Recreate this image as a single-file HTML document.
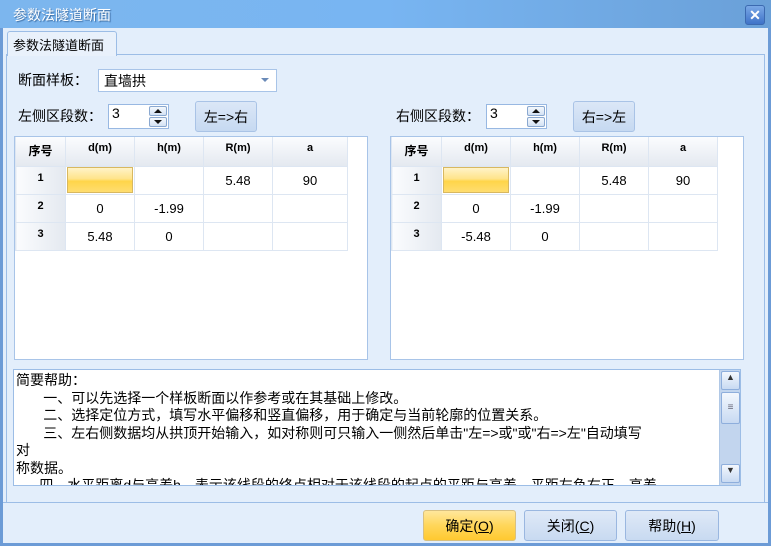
<!DOCTYPE html>
<html><head><meta charset="utf-8"><style>
*{box-sizing:border-box;margin:0;padding:0}
body{width:771px;height:546px;position:relative;overflow:hidden;background:#e3eefb;font-family:"Liberation Sans","Noto Sans CJK SC",sans-serif;font-size:13px;color:#000}
.a{position:absolute}
#frame{left:0;top:0;width:771px;height:546px;border:3px solid #6c9bd6;border-top:none}
#title{left:0;top:0;width:771px;height:28px;background:linear-gradient(90deg,#7cb6ee,#78b5f2 50%,#6aa0d8);color:#fff;font-size:14px;padding:5px 0 0 13px;text-shadow:1px 1px 1px #3a6aa0}
#close{left:745px;top:5px;width:20px;height:20px;border:1px solid #3c6ab0;border-radius:3px;background:linear-gradient(#7aa8e6,#3f73c8);color:#fff;font-weight:bold;font-size:14px;text-align:center;line-height:18px}
#tab{left:7px;top:31px;width:110px;height:25px;border:1px solid #9cbde6;border-bottom:none;border-radius:3px 3px 0 0;background:#e9f1fb;padding:3px 0 0 5px;z-index:2}
#panel{left:6px;top:54px;width:759px;height:449px;border:1px solid #9cbde6}
#bottomline{left:3px;top:502px;width:765px;height:1px;background:#9cbde6}
.combo{background:#fff;border:1px solid #a8c4e8;padding:1px 0 0 5px;font-size:14px}
.spin{background:#fff;border:1px solid #98b8e2;font-size:14px;padding:0 0 0 3px}
.sbtn{position:absolute;right:1px;width:18px;height:10px;border:1px solid #8aa8d0;border-radius:2px;background:linear-gradient(#f4f8fd,#d4e2f4)}
.sbtn i{position:absolute;left:4px;width:0;height:0;border-left:4px solid transparent;border-right:4px solid transparent}
.up i{top:2px;border-bottom:4px solid #111}
.dn i{top:2px;border-top:4px solid #111}
.btn{border:1px solid #a9c3e6;border-radius:3px;background:linear-gradient(#dbe7f7,#c6d9f1);text-align:center;font-size:14px}
.grid{background:#fff;border:1px solid #a8c4e8}
table{border-collapse:collapse;position:absolute;left:0;top:0}
td{border:1px solid #dde6f2;height:28px;text-align:center;font-size:13px;padding:0}
th{height:29px;font-size:11px;font-weight:bold;background:linear-gradient(#fbfcfe,#e4e9f0);border:1px solid #dde6f2;border-top:none;vertical-align:top;padding-top:5px}
td.h{background:linear-gradient(90deg,#fbfcfe,#e4e9f0);font-size:11px;font-weight:bold;vertical-align:top;padding-top:5px}
td.y{padding:0}
td.y div{margin:0 1px;height:26px;border:1px solid #d8b860;background:linear-gradient(#fff3c8,#ffe48a 45%,#ffd54a 55%,#ffdd70)}
#help{left:13px;top:369px;width:728px;height:117px;background:#fff;border:1px solid #9cbde6;overflow:hidden;font-size:14px;line-height:17.5px;padding:2px 0 0 2px}
#sb{left:719px;top:370px;width:21px;height:115px;background:#c2d5ee;border-left:1px solid #b0c8e6}
.sba{position:absolute;left:1px;width:19px;height:19px;border:1px solid #8eaedc;border-radius:2px;background:linear-gradient(#f3f7fd,#c8daf2)}
.db{border:1px solid #9ab7e0;border-radius:3px;background:linear-gradient(#dfe9f7,#c8daf1);text-align:center;font-size:14px;padding-top:5px}
</style></head><body>
<div class="a" id="frame"></div>
<div class="a" id="title">参数法隧道断面</div>
<div class="a" id="close">✕</div>
<div class="a" id="panel"></div>
<div class="a" id="tab">参数法隧道断面</div>
<div class="a" id="bottomline"></div>

<div class="a" style="left:18px;top:70px;font-size:14px">断面样板：</div>
<div class="a combo" style="left:98px;top:69px;width:179px;height:23px">直墙拱<span style="position:absolute;right:7px;top:8px;border:4px solid transparent;border-top:4px solid #6a8ab8;border-bottom:none;width:0;height:0"></span></div>

<div class="a" style="left:18px;top:106px;font-size:14px">左侧区段数：</div>
<div class="a spin" style="left:108px;top:104px;width:61px;height:25px">3<div class="sbtn up" style="top:1px"><i></i></div><div class="sbtn dn" style="top:12px"><i></i></div></div>
<div class="a btn" style="left:195px;top:101px;width:62px;height:31px;padding-top:5px">左=&gt;右</div>

<div class="a" style="left:396px;top:106px;font-size:14px">右侧区段数：</div>
<div class="a spin" style="left:486px;top:104px;width:61px;height:25px">3<div class="sbtn up" style="top:1px"><i></i></div><div class="sbtn dn" style="top:12px"><i></i></div></div>
<div class="a btn" style="left:573px;top:101px;width:62px;height:31px;padding-top:5px">右=&gt;左</div>

<div class="a grid" style="left:14px;top:136px;width:354px;height:224px">
<table><tr><th style="width:50px;font-size:12px">序号</th><th style="width:69px">d(m)</th><th style="width:69px">h(m)</th><th style="width:69px">R(m)</th><th style="width:75px">a</th></tr>
<tr><td class="h">1</td><td class="y"><div></div></td><td></td><td>5.48</td><td>90</td></tr>
<tr><td class="h">2</td><td>0</td><td>-1.99</td><td></td><td></td></tr>
<tr><td class="h">3</td><td>5.48</td><td>0</td><td></td><td></td></tr></table></div>

<div class="a grid" style="left:390px;top:136px;width:354px;height:224px">
<table><tr><th style="width:50px;font-size:12px">序号</th><th style="width:69px">d(m)</th><th style="width:69px">h(m)</th><th style="width:69px">R(m)</th><th style="width:69px">a</th></tr>
<tr><td class="h">1</td><td class="y"><div></div></td><td></td><td>5.48</td><td>90</td></tr>
<tr><td class="h">2</td><td>0</td><td>-1.99</td><td></td><td></td></tr>
<tr><td class="h">3</td><td>-5.48</td><td>0</td><td></td><td></td></tr></table></div>

<div class="a" id="help">简要帮助：<br>&nbsp;&nbsp;&nbsp;&nbsp;&nbsp;&nbsp;&nbsp;一、可以先选择一个样板断面以作参考或在其基础上修改。<br>&nbsp;&nbsp;&nbsp;&nbsp;&nbsp;&nbsp;&nbsp;二、选择定位方式，填写水平偏移和竖直偏移，用于确定与当前轮廓的位置关系。<br>&nbsp;&nbsp;&nbsp;&nbsp;&nbsp;&nbsp;&nbsp;三、左右侧数据均从拱顶开始输入，如对称则可只输入一侧然后单击"左=&gt;或"或"右=&gt;左"自动填写<br>对<br>称数据。<br>&nbsp;&nbsp;&nbsp;&nbsp;&nbsp;&nbsp;四、水平距离d与高差h，表示该线段的终点相对于该线段的起点的平距与高差，平距左负右正，高差</div>
<div class="a" id="sb"><div class="sba" style="top:1px;font-size:9px;text-align:center;color:#333">▲</div><div class="sba" style="top:22px;height:32px;text-align:center;font-size:10px;color:#667;line-height:30px">≡</div><div class="sba" style="top:94px;font-size:9px;text-align:center;color:#333">▼</div></div>

<div class="a db" style="left:423px;top:510px;width:93px;height:31px;background:linear-gradient(#ffe79c,#ffd65a 50%,#ffc930);border-color:#d8c080">确定(<u>O</u>)</div>
<div class="a db" style="left:524px;top:510px;width:93px;height:31px">关闭(<u>C</u>)</div>
<div class="a db" style="left:625px;top:510px;width:94px;height:31px">帮助(<u>H</u>)</div>
</body></html>
